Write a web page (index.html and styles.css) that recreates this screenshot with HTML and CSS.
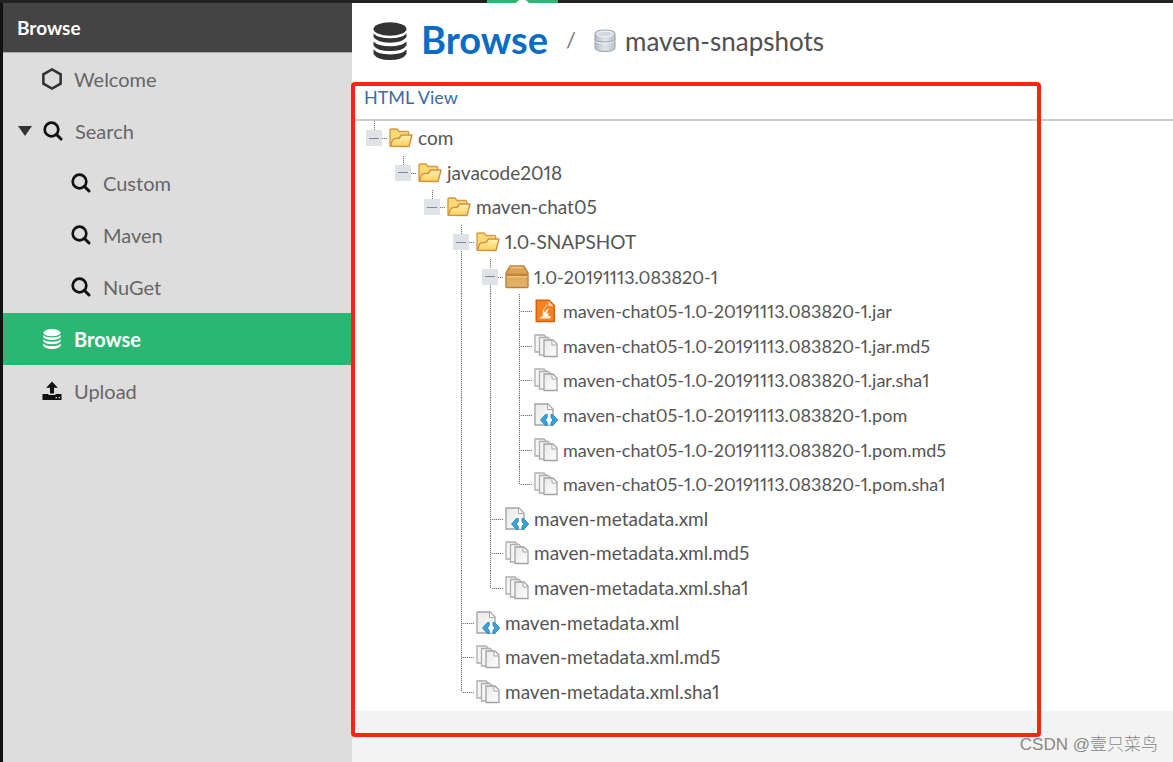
FILE: index.html
```
<!DOCTYPE html>
<html lang="en">
<head>
<meta charset="utf-8">
<title>Browse maven-snapshots</title>
<link rel="stylesheet" href="styles.css">
</head>
<body>
<svg class="sprite" aria-hidden="true">
  <defs>
    <linearGradient id="g-folder" x1="0" y1="0" x2="0" y2="1"><stop offset="0" stop-color="#fff3b8"/><stop offset="1" stop-color="#fbcf58"/></linearGradient>
    <linearGradient id="g-box" x1="0" y1="0" x2="0" y2="1"><stop offset="0" stop-color="#d9a050"/><stop offset="1" stop-color="#e3b469"/></linearGradient>
    <linearGradient id="g-page" x1="0" y1="0" x2="1" y2="1"><stop offset="0" stop-color="#e9e9e9"/><stop offset="1" stop-color="#fdfdfd"/></linearGradient>
    <linearGradient id="g-disk" x1="0" y1="0" x2="1" y2="0"><stop offset="0" stop-color="#b4bcc6"/><stop offset=".5" stop-color="#e0e5ea"/><stop offset="1" stop-color="#b9c1ca"/></linearGradient>
  </defs>
  <symbol id="db" viewBox="0 0 34 38">
    <ellipse cx="17" cy="7" rx="16.5" ry="6.8"/>
    <path d="M.5 11.5Q5 16.300 17 16.300T33.500 11.500V15Q30 20.700 17 20.700T.5 15z"/>
    <path d="M.5 19.500Q5 24.300 17 24.300T33.500 19.500V23.500Q30 29 17 29T.5 23.500z"/>
    <path d="M.5 27.500Q5 32.400 17 32.400T33.500 27.500V32Q30 38 17 38T.5 32z"/>
  </symbol>
  <symbol id="hex" viewBox="0 0 22 24"><path d="M11 1.500 20.500 6.800v10.400L11 22.500l-9.500-5.300V6.800z" fill="none" stroke="#333" stroke-width="2.800"/></symbol>
  <symbol id="search" viewBox="0 0 20 20"><circle cx="8.500" cy="8.500" r="6.800" fill="none" stroke="#111" stroke-width="2.700"/><path d="m13.500 13.500 4.500 4.500" stroke="#111" stroke-width="3" stroke-linecap="round"/></symbol>
  <symbol id="upload" viewBox="0 0 20 19"><path d="M10 0 15.800 6.300H12V12H8V6.300H4.200z"/><path d="M.5 12.500H6.500V13.500H13.500V12.500H19.500V18.500H.5z"/><path d="M13.500 16.200h1.500M16.500 16.200h1.500" stroke="#ddd" stroke-width="1.200"/></symbol>
  <symbol id="disk" viewBox="0 0 22 24">
    <path d="M1 5V18.500Q1 22.500 11 22.500T21 18.500V5Q21 1 11 1T1 5z" fill="url(#g-disk)" stroke="#98a1ab"/>
    <ellipse cx="11" cy="5" rx="8.500" ry="2.800" fill="#d3d9df" stroke="#f4f6f8"/>
    <path d="M1 10.500Q2 13 11 13T21 10.500" fill="none" stroke="#98a1ab"/><path d="M1.500 12Q3 14.200 11 14.200T20.500 12" fill="none" stroke="#f4f6f8"/>
  </symbol>
  <symbol id="folder" viewBox="0 0 24 20">
    <path d="M1 18.500V2.200Q1 1 2.200 1H8l2 2.500h8.500q1.200 0 1.200 1.200V7" fill="#fbd974" stroke="#d49a48" stroke-width="1.400"/>
    <path d="M1.500 18.300Q3 11.500 5 10.800T10 10.500L12.500 7H23L20 18.500z" fill="url(#g-folder)" stroke="#d09040" stroke-width="1.400" stroke-linejoin="round"/>
  </symbol>
  <symbol id="box" viewBox="0 0 24 24">
    <path d="M1 8 4.500 2Q5 1 6 1H18q1 0 1.500 1L23 8V21.500q0 1-1 1H2q-1 0-1-1z" fill="url(#g-box)" stroke="#b98038" stroke-width="1.400"/>
    <path d="M1.500 8.500H22.500V11H1.500z" fill="#c68536"/><path d="M1.700 11.900H22.300" stroke="#f2cf92"/><path d="M5.500 2.500H18.500" stroke="#efc583" stroke-width="1.500"/>
  </symbol>
  <symbol id="jar" viewBox="0 0 24 24">
    <path d="M2.300 1.200H15L20.300 6.500V22.500H2.300z" fill="#f58220" stroke="#d8620b" stroke-width="1.600"/>
    <path d="M14.500 2V7h5z" fill="#ffd8b2"/>
    <path d="M13 4.500C14 8 8.500 9.500 10.500 13.500 12 11.500 12.500 10 15.500 9.500 13.500 11 13.500 13 12.500 14.500H15L14 17H16.500V19.500H5.500L8 17H9.500L8 14.500H9.500C7.500 11 12 8 13 4.500z" fill="#fff0df"/>
  </symbol>
  <symbol id="pages" viewBox="0 0 24 24">
    <path d="M1 1H10l3 3V18H1z" fill="#f5f5f5" stroke="#adadad" stroke-width="1.300"/>
    <path d="M5.500 3.500H14l3 3V21H5.500z" fill="#f5f5f5" stroke="#adadad" stroke-width="1.300"/>
    <path d="M10 6H19l4 4V22.500H10z" fill="url(#g-page)" stroke="#a3a3a3" stroke-width="1.300"/>
    <path d="M18 6.500V11h4.500" fill="#fff" stroke="#a3a3a3"/>
  </symbol>
  <symbol id="xml" viewBox="0 0 24 24">
    <path d="M1 1H14L19 6V22H1z" fill="url(#g-page)" stroke="#a3a3a3" stroke-width="1.300"/>
    <path d="M13.500 1.500V6.500H18.500" fill="#fff" stroke="#a3a3a3"/>
    <path d="M13 12.500 19.500 12.500V21.500H13z" fill="#fff"/>
    <path d="M13.200 11.500H11.500L6.500 17l5 5.500h1.700V19.500L11.300 17l1.900-2.500z M17 11.500h1.700L23.700 17l-5 5.500H17V19.500L18.900 17 17 14.500z" fill="#38a5da" stroke="#1678b4" stroke-width=".8"/>
  </symbol>
</svg>
<div class="app">
  <header class="topbar"><span class="topbar-tab"></span></header>
  <nav class="sidebar" aria-label="Browse">
    <h2 class="sidebar-title">Browse</h2>
    <a class="nav-item" href="#welcome"><svg class="nav-icon hex"><use href="#hex"/></svg>Welcome</a>
    <a class="nav-item open" href="#search"><span class="caret"></span><svg class="nav-icon"><use href="#search"/></svg>Search</a>
    <a class="nav-item sub" href="#custom"><svg class="nav-icon"><use href="#search"/></svg>Custom</a>
    <a class="nav-item sub" href="#maven"><svg class="nav-icon"><use href="#search"/></svg>Maven</a>
    <a class="nav-item sub" href="#nuget"><svg class="nav-icon"><use href="#search"/></svg>NuGet</a>
    <a class="nav-item active" href="#browse" aria-current="page"><svg class="nav-icon"><use href="#db"/></svg>Browse</a>
    <a class="nav-item" href="#upload"><svg class="nav-icon"><use href="#upload"/></svg>Upload</a>
  </nav>
  <main class="content">
    <div class="crumbs">
      <svg class="crumb-db"><use href="#db"/></svg>
      <h1 class="crumb-title">Browse</h1>
      <span class="slash">/</span>
      <svg class="crumb-disk"><use href="#disk"/></svg>
      <span class="crumb-repo">maven-snapshots</span>
    </div>
    <div class="toolbar"><a class="html-view" href="#html">HTML View</a></div>
    <ul class="tree">
      <li class="row"><button class="cell end toggle" aria-label="Collapse com"></button><svg class="icon"><use href="#folder"/></svg><span>com</span></li>
      <li class="row"><i class="cell"></i><button class="cell end toggle" aria-label="Collapse javacode2018"></button><svg class="icon"><use href="#folder"/></svg><span>javacode2018</span></li>
      <li class="row"><i class="cell"></i><i class="cell"></i><button class="cell end toggle" aria-label="Collapse maven-chat05"></button><svg class="icon"><use href="#folder"/></svg><span>maven-chat05</span></li>
      <li class="row"><i class="cell"></i><i class="cell"></i><i class="cell"></i><button class="cell line toggle" aria-label="Collapse 1.0-SNAPSHOT"></button><svg class="icon"><use href="#folder"/></svg><span>1.0-SNAPSHOT</span></li>
      <li class="row build"><i class="cell"></i><i class="cell"></i><i class="cell"></i><i class="cell line"></i><button class="cell line toggle" aria-label="Collapse 1.0-20191113.083820-1"></button><svg class="icon"><use href="#box"/></svg><span>1.0-20191113.083820-1</span></li>
      <li class="row build"><i class="cell"></i><i class="cell"></i><i class="cell"></i><i class="cell line"></i><i class="cell line"></i><i class="cell line tee"></i><svg class="icon"><use href="#jar"/></svg><span>maven-chat05-1.0-20191113.083820-1.jar</span></li>
      <li class="row build"><i class="cell"></i><i class="cell"></i><i class="cell"></i><i class="cell line"></i><i class="cell line"></i><i class="cell line tee"></i><svg class="icon"><use href="#pages"/></svg><span>maven-chat05-1.0-20191113.083820-1.jar.md5</span></li>
      <li class="row build"><i class="cell"></i><i class="cell"></i><i class="cell"></i><i class="cell line"></i><i class="cell line"></i><i class="cell line tee"></i><svg class="icon"><use href="#pages"/></svg><span>maven-chat05-1.0-20191113.083820-1.jar.sha1</span></li>
      <li class="row build"><i class="cell"></i><i class="cell"></i><i class="cell"></i><i class="cell line"></i><i class="cell line"></i><i class="cell line tee"></i><svg class="icon"><use href="#xml"/></svg><span>maven-chat05-1.0-20191113.083820-1.pom</span></li>
      <li class="row build"><i class="cell"></i><i class="cell"></i><i class="cell"></i><i class="cell line"></i><i class="cell line"></i><i class="cell line tee"></i><svg class="icon"><use href="#pages"/></svg><span>maven-chat05-1.0-20191113.083820-1.pom.md5</span></li>
      <li class="row build"><i class="cell"></i><i class="cell"></i><i class="cell"></i><i class="cell line"></i><i class="cell line"></i><i class="cell end tee"></i><svg class="icon"><use href="#pages"/></svg><span>maven-chat05-1.0-20191113.083820-1.pom.sha1</span></li>
      <li class="row"><i class="cell"></i><i class="cell"></i><i class="cell"></i><i class="cell line"></i><i class="cell line tee"></i><svg class="icon"><use href="#xml"/></svg><span>maven-metadata.xml</span></li>
      <li class="row"><i class="cell"></i><i class="cell"></i><i class="cell"></i><i class="cell line"></i><i class="cell line tee"></i><svg class="icon"><use href="#pages"/></svg><span>maven-metadata.xml.md5</span></li>
      <li class="row"><i class="cell"></i><i class="cell"></i><i class="cell"></i><i class="cell line"></i><i class="cell end tee"></i><svg class="icon"><use href="#pages"/></svg><span>maven-metadata.xml.sha1</span></li>
      <li class="row"><i class="cell"></i><i class="cell"></i><i class="cell"></i><i class="cell line tee"></i><svg class="icon"><use href="#xml"/></svg><span>maven-metadata.xml</span></li>
      <li class="row"><i class="cell"></i><i class="cell"></i><i class="cell"></i><i class="cell line tee"></i><svg class="icon"><use href="#pages"/></svg><span>maven-metadata.xml.md5</span></li>
      <li class="row"><i class="cell"></i><i class="cell"></i><i class="cell"></i><i class="cell end tee"></i><svg class="icon"><use href="#pages"/></svg><span>maven-metadata.xml.sha1</span></li>
    </ul>
    <footer class="footer"><span class="watermark">CSDN @壹只菜鸟</span></footer>
    <div class="highlight"></div>
  </main>
</div>
</body>
</html>
```
FILE: styles.css
```
* { box-sizing: border-box; }
body { margin: 0; font-family: Lato, "Liberation Sans", sans-serif; font-size: 19px; color: #555; background: #fff; font-variant-numeric: proportional-nums; }
.sprite { position: absolute; width: 0; height: 0; }
.app { display: grid; grid-template-columns: 352px 1fr; grid-template-rows: 3px 1fr; min-height: 100vh; }

.topbar { grid-column: 1 / -1; background: #222; display: flex; padding-left: 487px; }
.topbar-tab { width: 71px; background: radial-gradient(circle at 50% 7px, #fff 7px, #2bb673 8px); }

.sidebar { background: #ddd; border-left: 3px solid #111; display: flex; flex-direction: column; }
.sidebar-title { margin: 0; height: 50px; padding: 0 14px; line-height: 50px; font-size: 19px; font-weight: 700; color: #fff; background: #444; border-bottom: 1px solid #aaa; }
.nav-item { display: flex; align-items: center; gap: 12px; height: 52px; padding-left: 39px; font-size: 20px; color: #666; text-decoration: none; }
.nav-item.open { padding-left: 15px; }
.nav-item.sub { padding-left: 68px; }
.nav-item.active { background: #2bb673; color: #fff; font-weight: 700; }
.nav-icon { width: 20px; height: 20px; fill: #111; }
.nav-icon.hex { height: 24px; }
.active .nav-icon { fill: #fff; }
.caret { border: 7px solid transparent; border-top: 10px solid #333; border-bottom: 0; margin-right: -1px; }

.content { position: relative; display: flex; flex-direction: column; }
.crumbs { display: flex; align-items: center; height: 76px; padding-left: 21px; }
.crumb-db { width: 34px; height: 38px; fill: #333; }
.crumb-title { margin: 0 0 4px 14px; font-size: 38px; line-height: 40px; color: #0b6cc4; }
.slash { margin: 0 18px 4px; font-size: 22px; color: #777; }
.crumb-disk { width: 22px; height: 24px; }
.crumb-repo { margin-left: 9px; font-size: 26px; color: #505050; }
.toolbar { display: flex; align-items: center; height: 42px; padding: 0 12px 4px; border-bottom: 2px solid #ccc; }
.html-view { font-size: 18px; color: #3b6ba5; text-decoration: none; }

.tree { flex: 1; display: grid; grid-auto-rows: 1fr; margin: 0; padding: 0 0 2px 8px; list-style: none; }
.row { display: flex; align-items: center; line-height: 24px; white-space: nowrap; }
.row.build { font-size: 18px; }
.cell { flex: none; align-self: stretch; width: 29px; padding: 0; border: 0; background-color: transparent; background-repeat: no-repeat; position: relative; }
.line, .end { background-image: repeating-linear-gradient(#777 0 1px, #ddd 1px 2px); background-position: 14px 0; background-size: 1px 100%; }
.end { background-size: 1px 50%; }
.tee::after, .toggle::after { content: ""; position: absolute; left: 15px; right: 2px; top: 50%; height: 1px; background: repeating-linear-gradient(90deg, #ddd 0 1px, #777 1px 2px); }
.toggle::before { content: ""; position: absolute; z-index: 1; left: 6px; top: calc(50% - 8px); width: 16px; height: 16px; background: linear-gradient(#888, #888) center / 10px 1px no-repeat #dfe2e6; }
.icon { flex: none; width: 24px; height: 24px; margin-right: 5px; }

.footer { display: flex; justify-content: flex-end; align-items: flex-end; height: 51px; padding: 0 15px 5px; background: #f3f3f3; }
.watermark { font: 300 17px/24px "Liberation Sans", "Noto Sans CJK SC", sans-serif; color: #888; }
.highlight { position: absolute; left: -1px; top: 79px; bottom: 25px; width: 84%; border: 4px solid #ff2314; border-radius: 4px; pointer-events: none; }
```
